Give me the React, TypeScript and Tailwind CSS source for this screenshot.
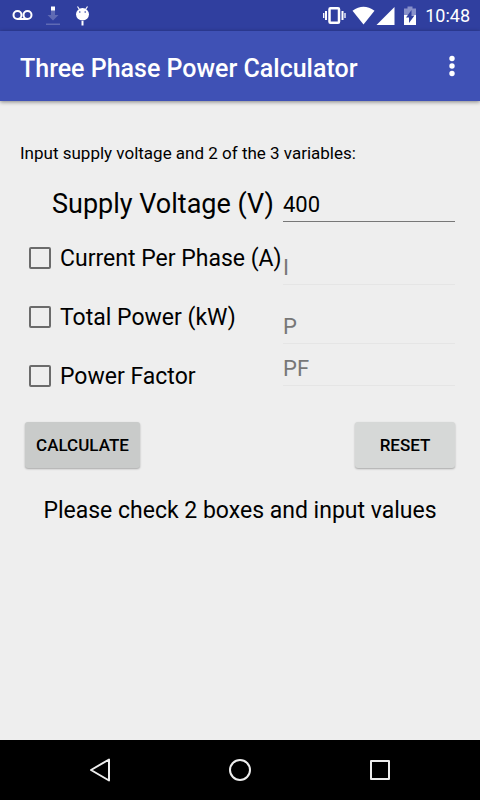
import { useState } from "react";

type FieldProps = {
  label: string;
  hint: string;
  inputAlign: string;
};

function StatusBar() {
  return (
    <div className="flex h-[31px] items-center justify-between bg-[#303f9f] pl-3 pr-2.5 text-white">
      <svg className="h-[31px] w-20" viewBox="0 0 80 31" aria-hidden="true">
        <g fill="none" stroke="#fff" strokeWidth="2">
          <circle cx="5.5" cy="15" r="4" />
          <circle cx="15.5" cy="15" r="4" />
          <path d="M5.5 19h10" />
        </g>
        <g fill="#5f6ab4">
          <path d="M39 10h4v5h3.500L41 20.500 35.500 15H39z" />
          <path d="M34 23.500h14v1.500H34z" />
        </g>
        <path fill="#fff" d="M39 6.500h4v4h-4z" />
        <ellipse cx="70.500" cy="14.300" rx="6.500" ry="6.200" fill="#fff" />
        <path fill="#fff" d="M69.500 21h2v4.500h-2z" />
        <path d="M65.500 6.500l2 3M75.500 6.500l-2 3" stroke="#fff" strokeWidth="1.200" />
        <g fill="#303f9f">
          <circle cx="67.800" cy="12" r="0.800" />
          <circle cx="73.200" cy="12" r="0.800" />
        </g>
      </svg>
      <div className="flex items-center gap-1">
        <svg className="h-[31px] w-[98px]" viewBox="0 0 98 31" aria-hidden="true">
          <g fill="none" stroke="#fff">
            <rect x="6.500" y="8.200" width="9.500" height="14.600" rx="1" strokeWidth="2.500" />
            <path d="M3 11v9M19.500 11v9" strokeWidth="2" />
            <path d="M0.700 13v5M22 13v5" strokeWidth="1.300" />
          </g>
          <path fill="#fff" d="M29.500 10.800q11-8 22 0L40.500 24.500z" />
          <path fill="#fff" d="M71.500 7v18H53.500z" />
          <path fill="#8790ca" d="M84.500 6.500h5v2h3.500V16H81V8.500h3.500z" />
          <path fill="#fff" d="M81 15h12v10H81z" />
          <path fill="#303f9f" d="M88.500 10v5.500h3L86 23v-5.500h-3z" />
        </svg>
        <span className="text-lg leading-6">10:48</span>
      </div>
    </div>
  );
}

function Field({ label, hint, inputAlign }: FieldProps) {
  const [checked, setChecked] = useState(false);
  return (
    <div className={`flex h-[59px] ${inputAlign}`}>
      <label className="flex h-[58px] flex-1 items-center gap-[9px] self-start whitespace-nowrap pl-[9px] text-[23px] leading-[30px]">
        <input
          type="checkbox"
          checked={checked}
          onChange={(e) => setChecked(e.target.checked)}
          className="size-[22px] shrink-0 appearance-none rounded-[2px] border-2 border-[#6b6b6b] checked:bg-[#3f51b5]"
        />
        <span className="pt-0.5">{label}</span>
      </label>
      <div className="h-[42px] w-[172px] pb-[3px]">
        <input
          type="text"
          aria-label={label}
          placeholder={hint}
          className="h-full w-full border-b border-[#e5e5e5] bg-transparent pt-1 text-[22px] leading-7 outline-none placeholder:text-[#777777]"
        />
      </div>
    </div>
  );
}

export default function App() {
  return (
    <div className="flex min-h-screen flex-col bg-[#eeeeee] font-[Roboto,sans-serif] text-black">
      <StatusBar />
      <header className="z-10 flex h-[70px] items-center justify-between bg-[#3f51b5] pl-5 pr-4 text-white shadow-[0_1px_4px_rgba(0,0,0,0.45)]">
        <h1 className="pt-1.5 text-[25px] font-medium leading-8">Three Phase Power Calculator</h1>
        <button type="button" aria-label="More options" className="flex w-6 justify-center">
          <svg className="h-6 w-2" viewBox="0 0 8 24" fill="#fff" aria-hidden="true">
            <circle cx="4" cy="4.500" r="2.700" />
            <circle cx="4" cy="12" r="2.700" />
            <circle cx="4" cy="19.500" r="2.700" />
          </svg>
        </button>
      </header>

      <main className="flex-1 px-5 pt-10">
        <p className="text-[17px] leading-6">Input supply voltage and 2 of the 3 variables:</p>

        <form className="pr-[5px] pt-[18px]" onSubmit={(e) => e.preventDefault()}>
          <div className="mb-1 flex h-[42px] items-center">
            <label htmlFor="voltage" className="flex-1 whitespace-nowrap pl-8 text-[27px] leading-9">
              Supply Voltage (V)
            </label>
            <div className="h-full w-[172px] pb-[3px]">
              <input
                id="voltage"
                type="text"
                defaultValue="400"
                className="h-full w-full border-b border-[#777777] bg-transparent pt-1 text-[22px] leading-7 outline-none"
              />
            </div>
          </div>
          <Field label="Current Per Phase (A)" hint="I" inputAlign="items-end" />
          <Field label="Total Power (kW)" hint="P" inputAlign="items-end" />
          <Field label="Power Factor" hint="PF" inputAlign="items-start" />

          <div className="flex justify-between pl-[5px] pt-4 text-[17px] font-medium leading-6">
            <button type="button" className="h-[46px] w-[115px] rounded-[3px] bg-[#c9cbca] shadow-[0_1px_2px_rgba(0,0,0,0.3)]">
              CALCULATE
            </button>
            <button type="reset" className="h-[46px] w-[100px] rounded-[3px] bg-[#d6d8d7] shadow-[0_1px_2px_rgba(0,0,0,0.3)]">
              RESET
            </button>
          </div>
        </form>

        <p className="pt-7 text-center text-[23px] leading-[30px]">Please check 2 boxes and input values</p>
      </main>

      <nav className="flex h-[60px] items-center justify-center gap-[100px] bg-black">
        <button type="button" aria-label="Back" className="flex w-10 justify-center">
          <svg className="size-6" viewBox="0 0 24 24" fill="none" stroke="#eee" strokeWidth="2" strokeLinejoin="round" aria-hidden="true">
            <path d="M21 1.500v21L3 12z" />
          </svg>
        </button>
        <button type="button" aria-label="Home" className="flex w-10 justify-center">
          <svg className="size-6" viewBox="0 0 24 24" fill="none" stroke="#eee" strokeWidth="2" aria-hidden="true">
            <circle cx="12" cy="12" r="10" />
          </svg>
        </button>
        <button type="button" aria-label="Recent apps" className="flex w-10 justify-center">
          <svg className="size-6" viewBox="0 0 24 24" fill="none" stroke="#eee" strokeWidth="2" strokeLinejoin="round" aria-hidden="true">
            <path d="M3 3h18v18H3z" />
          </svg>
        </button>
      </nav>
    </div>
  );
}
